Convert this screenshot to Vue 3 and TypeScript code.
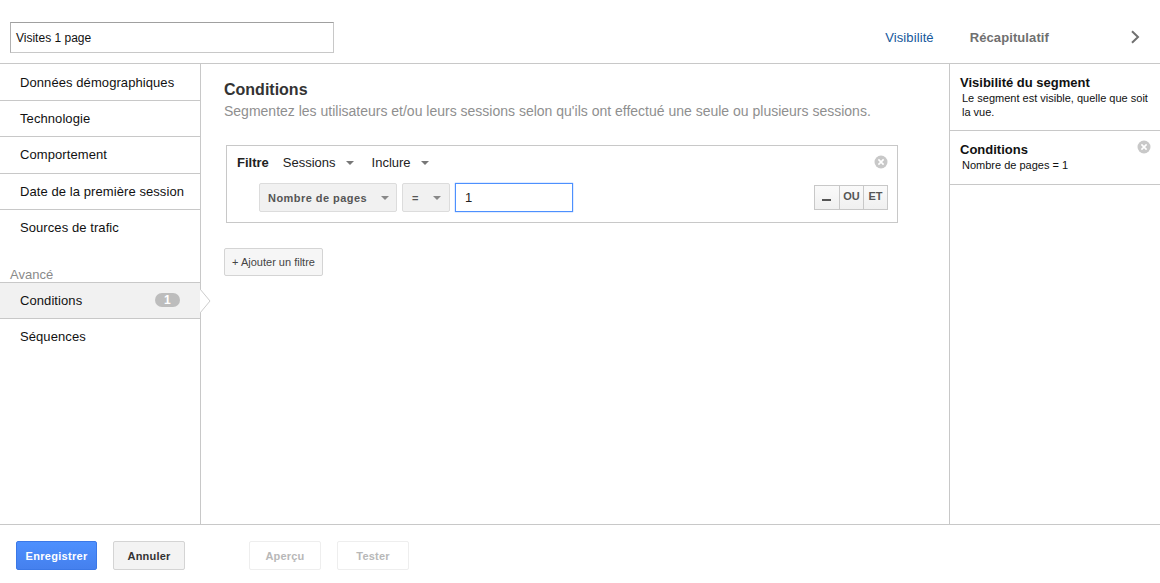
<script setup lang="ts">
const navTop: string[] = ['Données démographiques', 'Technologie', 'Comportement', 'Date de la première session', 'Sources de trafic']
</script>

<template>
  <div class="page">
    <header class="top">
      <div class="name">Visites 1 page</div>
      <nav class="tabs">
        <span class="tab-link">Visibilité</span>
        <span class="tab-bold">Récapitulatif</span>
        <svg class="chev" width="12" height="14" viewBox="0 0 12 14"><path d="M2 1.2 L8 7 L2 12.8" fill="none" stroke="#707070" stroke-width="2"/></svg>
      </nav>
    </header>
    <main class="main">
      <aside class="side">
        <div v-for="n in navTop" :key="n" class="nav-row">{{ n }}</div>
        <div class="adv">Avancé</div>
        <div class="nav-row active">
          <span>Conditions</span><span class="badge">1</span>
          <svg class="pointer" width="11" height="24" viewBox="0 0 11 24"><path d="M0 0 L10 12 L0 24 Z" fill="#fff"/><path d="M0 0 L10 12 L0 24" fill="none" stroke="#ccc"/></svg>
        </div>
        <div class="nav-row last">Séquences</div>
      </aside>
      <section class="content">
        <h1 class="title">Conditions</h1>
        <p class="sub">Segmentez les utilisateurs et/ou leurs sessions selon qu'ils ont effectué une seule ou plusieurs sessions.</p>
        <div class="filter">
          <div class="f-head">
            <b class="f-label">Filtre</b>
            <span class="f-menu">Sessions<i class="caret"></i></span>
            <span class="f-menu">Inclure<i class="caret"></i></span>
            <svg class="x f-x" width="14" height="14" viewBox="0 0 14 14"><circle cx="7" cy="7" r="6.5" fill="#c8c8c8"/><path d="M4.4 4.4 L9.6 9.6 M9.6 4.4 L4.4 9.6" stroke="#fff" stroke-width="1.6"/></svg>
          </div>
          <div class="f-row">
            <div class="sel sel-a">Nombre de pages<i class="caret"></i></div>
            <div class="sel sel-b">=<i class="caret"></i></div>
            <div class="val">1</div>
            <div class="ops"><span class="op minus"><i></i></span><span class="op">OU</span><span class="op">ET</span></div>
          </div>
        </div>
        <div class="add">+ Ajouter un filtre</div>
      </section>
      <aside class="summary">
        <div class="s-block s-one">
          <div class="s-title">Visibilité du segment</div>
          <div class="s-text">Le segment est visible, quelle que soit la vue.</div>
        </div>
        <div class="s-block s-two">
          <div class="s-title">Conditions</div>
          <div class="s-text">Nombre de pages = 1</div>
          <svg class="x s-x" width="14" height="14" viewBox="0 0 14 14"><circle cx="7" cy="7" r="6.5" fill="#c8c8c8"/><path d="M4.4 4.4 L9.6 9.6 M9.6 4.4 L4.4 9.6" stroke="#fff" stroke-width="1.6"/></svg>
        </div>
      </aside>
    </main>
    <footer class="foot">
      <div class="btn primary">Enregistrer</div>
      <div class="btn cancel">Annuler</div>
      <div class="btn dis first">Aperçu</div>
      <div class="btn dis">Tester</div>
    </footer>
  </div>
</template>

<style>
html, body { margin: 0; background: #fff; }
</style>

<style scoped>
.page { width: 1160px; height: 583px; display: flex; flex-direction: column; font-family: "Liberation Sans", Arial, sans-serif; color: #111; overflow: hidden; background: #fff; }
.top { height: 63px; border-bottom: 1px solid #c8c8c8; display: flex; align-items: flex-start; justify-content: space-between; flex: none; }
.name { margin: 22px 0 0 10px; width: 324px; height: 31px; box-sizing: border-box; border: 1px solid #c8c8c8; border-top-color: #a0a0a0; border-left-color: #b0b0b0; padding-left: 5px; font-size: 12px; line-height: 30px; color: #111; }
.tabs { display: flex; align-items: center; height: 16px; margin-top: 29px; }
.tab-link { font-size: 13px; letter-spacing: 0.1px; color: #15589b; margin-right: 36px; }
.tab-bold { font-size: 13px; letter-spacing: 0.1px; font-weight: 700; color: #6f6f6f; margin-right: 81px; }
.chev { margin-right: 18px; }
.main { flex: 1; display: flex; min-height: 0; }
.side { width: 200px; flex: none; border-right: 1px solid #c8c8c8; }
.nav-row { position: relative; height: 35.5px; border-bottom: 1px solid #c8c8c8; padding: 0 20px; font-size: 13px; letter-spacing: 0.08px; white-space: nowrap; line-height: 35px; display: flex; justify-content: space-between; align-items: center; }
.nav-row:first-child { height: 34.5px; padding-top: 1px; }
.nav-row:nth-child(5) { border-bottom: 0; }
.nav-row.active { background: #f1f1f1; border-top: 1px solid #c8c8c8; height: 35px; }
.nav-row.last { border-bottom: 0; }
.adv { margin-top: 20px; height: 16px; font-size: 13px; line-height: 18px; padding-left: 10px; color: #8a8a8a; }
.badge { width: 25px; height: 14px; border-radius: 7px; background: #bdbdbd; color: #fff; font-size: 12px; font-weight: 700; line-height: 14px; text-align: center; }
.pointer { position: absolute; left: 200px; top: 6px; }
.content { flex: 1; padding: 16px 0 0 23px; min-width: 0; }
.title { margin: 0; font-size: 16px; line-height: 20px; font-weight: 700; color: #333; }
.sub { margin: 1px 0 0; font-size: 14px; line-height: 20px; color: #8f8f8f; white-space: nowrap; }
.filter { margin: 24px 0 0 2px; width: 672px; height: 78px; box-sizing: border-box; border: 1px solid #c8c8c8; padding: 0 9px 0 10px; }
.f-head { display: flex; align-items: center; height: 33px; position: relative; }
.f-label { font-size: 13px; color: #222; margin-right: 14px; }
.f-menu { font-size: 13px; color: #222; margin-right: 18px; display: inline-flex; align-items: center; }
.caret { display: inline-block; width: 0; height: 0; border-left: 4px solid transparent; border-right: 4px solid transparent; border-top: 4px solid #777; margin-left: 10px; }
.f-x { position: absolute; right: 0; top: 9px; }
.f-row { display: flex; align-items: center; height: 29px; margin: 4px 0 0 22px; }
.sel { height: 29px; box-sizing: border-box; background: #f1f1f1; border: 1px solid #dcdcdc; border-radius: 2px; font-size: 11px; font-weight: 700; letter-spacing: 0.45px; color: #555; display: flex; align-items: center; justify-content: space-between; padding: 0 8px; }
.sel .caret { margin: 1px 0 0; border-top-color: #888; }
.sel-a { width: 138px; padding-right: 7px; }
.sel-b { width: 48px; margin-left: 5px; padding-left: 9px; }
.val { width: 118px; height: 29px; margin-left: 5px; box-sizing: border-box; border: 1px solid #4d90fe; box-shadow: 0 0 1px #4d90fe; font-size: 13px; line-height: 27px; padding-left: 9px; color: #222; }
.ops { margin-left: auto; display: flex; height: 25px; border: 1px solid #c8c8c8; box-sizing: border-box; }
.op { width: 23px; text-align: center; font-size: 11px; font-weight: 700; color: #555; line-height: 21px; background: linear-gradient(#fafafa, #f0f0f0); border-left: 1px solid #c8c8c8; }
.op.minus { width: 24px; border-left: 0; position: relative; }
.op.minus i { position: absolute; left: 7px; top: 13px; width: 9px; height: 2px; background: #555; }
.add { margin-top: 25px; width: 99px; height: 28px; box-sizing: border-box; border: 1px solid #d4d4d4; border-radius: 2px; background: #f6f6f6; font-size: 11px; line-height: 26px; text-align: center; color: #444; }
.summary { width: 210px; flex: none; border-left: 1px solid #c8c8c8; }
.s-block { position: relative; border-bottom: 1px solid #c8c8c8; box-sizing: border-box; padding: 11px 10px 0; }
.s-one { height: 67px; }
.s-two { height: 54px; }
.s-title { font-size: 13px; font-weight: 700; line-height: 16px; color: #111; }
.s-text { font-size: 11px; line-height: 14px; margin-left: 2px; color: #111; }
.s-x { position: absolute; right: 9px; top: 9px; }
.foot { height: 42px; flex: none; border-top: 1px solid #c8c8c8; display: flex; align-items: flex-start; padding: 16px 0 0 16px; }
.btn { height: 29px; box-sizing: border-box; border-radius: 2px; font-size: 11px; font-weight: 700; letter-spacing: 0.2px; line-height: 28px; text-align: center; }
.primary { width: 81px; letter-spacing: 0.3px; background: linear-gradient(#4d90fe, #4580ee); border: 1px solid #3b78e7; color: #fff; }
.cancel { width: 72px; margin-left: 16px; background: #f3f3f3; border: 1px solid #d4d4d4; color: #333; }
.dis { width: 72px; margin-left: 16px; background: #fff; border: 1px solid #eee; color: #b8b8b8; }
.dis.first { margin-left: 64px; }
</style>
